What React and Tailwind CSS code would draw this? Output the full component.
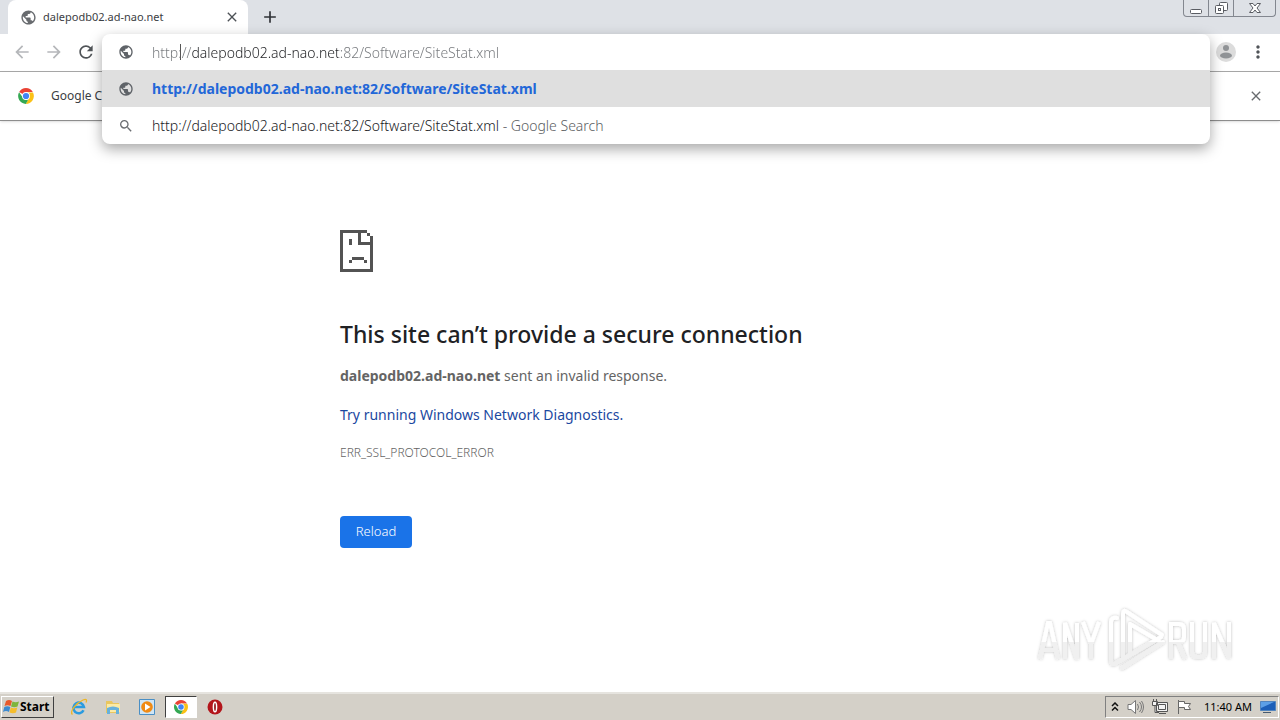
import {
  MdAdd,
  MdArrowBack,
  MdArrowForward,
  MdClose,
  MdMoreVert,
  MdPublic,
  MdRefresh,
  MdSearch,
} from 'react-icons/md';

const url = 'http://dalepodb02.ad-nao.net:82/Software/SiteStat.xml';

const ChromeLogo = ({ className }) => (
  <svg className={className} viewBox="0 0 48 48" aria-hidden="true">
    <path fill="#ea4335" d="M24 24 5.8 13.5A21 21 0 0 1 42.2 13.5H24z" />
    <path fill="#fbc116" d="M24 14.5h18.7A21 21 0 0 1 23.5 45L32.2 28.8z" />
    <path fill="#34a853" d="M5.5 14 15.8 28.8 24 33.5h6L23.5 45A21 21 0 0 1 5.5 14z" />
    <circle cx="24" cy="24" r="10.5" fill="#fff" />
    <circle cx="24" cy="24" r="8.3" fill="#4285f4" />
  </svg>
);

const SadPage = () => (
  <svg className="w-[33px] h-[42px]" viewBox="0 0 33 42" fill="#535353" shapeRendering="crispEdges" aria-hidden="true">
    <path d="M0 0h27v3h3v3h3v36H0zM3 3v36h27V15H18V3zM21 3v9h9V6h-3V3z" fillRule="evenodd" />
    <path d="M9 9h3v6H9zM12 27h12v3H12zM9 30h3v3H9zM24 30h3v3h-3z" />
  </svg>
);

const AnyRunMark = () => (
  <svg className="w-[200px] h-[68px]" viewBox="0 0 200 68" aria-hidden="true">
    <defs>
      <linearGradient id="fade" gradientUnits="userSpaceOnUse" x1="0" y1="0" x2="0" y2="68">
        <stop offset="53%" stopColor="#ffffff" />
        <stop offset="53%" stopColor="#f0f0f0" />
      </linearGradient>
      <filter id="soft" x="-10%" y="-20%" width="120%" height="140%">
        <feDropShadow dx="0" dy="0" stdDeviation="1.6" floodColor="#000" floodOpacity="0.26" />
      </filter>
    </defs>
    <g filter="url(#soft)" fill="none" stroke="url(#fade)" strokeWidth="4">
      <path d="M4 53 12 17h2l8 36M7 44h12M29 53V17l12 36V17M47 16l8 22 8-22M55 36v17" />
      <path strokeLinecap="round" strokeLinejoin="round" d="M81 12q-6-1-6 4v38q0 6 5 3l45-26M87 52V8q0-5 4-2l35 23M87 15v-5M94 18l29 17M94 18v31M127 36 86 62" />
      <path d="M135 53V18h8q5 0 5 5v8q0 5-5 5h-8M142 36l7 17M156 16v30q0 5 5 5h3q5 0 5-5V16M178 53V17l15 35V16" />
    </g>
  </svg>
);

const StartFlag = () => (
  <svg className="w-[17px] h-[16px]" viewBox="0 0 17 16" aria-hidden="true">
    <path fill="#e8592b" d="M3 2q3-2 6 0L7.5 7q-3-1.5-6 0z" />
    <path fill="#7eb53c" d="M9.5 2.5q3 1.5 6.5 0L14.5 7.5q-3 1.5-6.5 0z" />
    <path fill="#3c8ad0" d="M1.3 8q3-1.5 6 0L6 13q-3-2-6 0z" />
    <path fill="#f5bd2c" d="M7.8 8.5q3 1.5 6.5 0L13 13.5q-3 1.5-6.5 0z" />
  </svg>
);

const ExplorerIcon = () => (
  <svg className="w-[18px] h-[18px]" viewBox="0 0 18 18" aria-hidden="true">
    <path fill="none" stroke="#2a9be0" strokeWidth="2.6" d="M13.5 12.2A5.3 5.3 0 1 1 13.9 9H4" />
    <path fill="none" stroke="#edb625" strokeWidth="1.3" d="M2.5 16.5C-1 14 6 5 13 2c4-1.5 4 .5 3 2.5" />
  </svg>
);

const FolderIcon = () => (
  <svg className="w-[16px] h-[16px]" viewBox="0 0 16 16" aria-hidden="true">
    <path fill="#e9c65f" d="M1 2h6l1 2h6v10H1z" />
    <path fill="#fbeaa5" d="M2 5h13v8H2z" />
    <path fill="#67b1dc" d="M2 9q6-3 12 0v6h-3v-4H5v4H2z" />
  </svg>
);

const PlayerIcon = () => (
  <svg className="w-[16px] h-[16px]" viewBox="0 0 16 16" aria-hidden="true">
    <path fill="#cfe5f5" stroke="#4a8fc5" d="M.5.5h15v15H.5z" />
    <circle cx="8" cy="8" r="5.8" fill="#f08a13" />
    <path fill="#fff" d="M6 4.5 11.5 8 6 11.5z" />
  </svg>
);

const OperaIcon = () => (
  <svg className="w-[16px] h-[16px]" viewBox="0 0 16 16" aria-hidden="true">
    <circle cx="8" cy="8" r="7.5" fill="#b3151b" />
    <ellipse cx="8" cy="8" rx="1.6" ry="4.8" fill="#8c0d12" stroke="#fff" strokeWidth="1.5" />
  </svg>
);

const WindowButtons = () => (
  <div className="flex h-[17px] w-[93px] mr-1 border border-t-0 border-[#83878f] rounded-b text-[#5a5d63]">
    <button aria-label="Minimize" className="flex-1 flex items-center justify-center border-r border-[#83878f]">
      <svg className="w-[12px] h-[14px]" viewBox="0 0 12 14" fill="#fff" stroke="currentColor"><rect x=".5" y="8.5" width="11" height="4" rx="1" /></svg>
    </button>
    <button aria-label="Restore" className="flex-1 flex items-center justify-center border-r border-[#83878f]">
      <svg className="w-[13px] h-[14px]" viewBox="0 0 13 14" fill="#fff" stroke="currentColor">
        <rect x="4.5" y="1.5" width="8" height="8" rx="1" />
        <rect x=".5" y="4.5" width="8" height="8" rx="1" />
        <rect x="3.5" y="7.5" width="2" height="2" />
      </svg>
    </button>
    <button aria-label="Close window" className="w-[41px] flex items-center justify-center">
      <svg className="w-[12px] h-[12px]" viewBox="0 0 12 12" fill="#fff" stroke="currentColor">
        <path d="M.5 1.5h3.5L6 4l2-2.5h3.500L8 6l3.500 4.500H8L6 8l-2 2.500H.5L4 6z" />
      </svg>
    </button>
  </div>
);

const TabStrip = () => (
  <div className="flex items-start h-[34px] bg-[#dee1e6]">
    <div className="flex items-center h-full w-[240px] ml-2 pl-3 pr-2 bg-white rounded-t-lg">
      <MdPublic className="w-[17px] h-[17px] text-[#686b6f]" />
      <span className="flex-1 ml-[6px] text-[11px] text-[#3c4043]">dalepodb02.ad-nao.net</span>
      <button aria-label="Close tab"><MdClose className="w-4 h-4 text-[#4d5156]" /></button>
    </div>
    <button aria-label="New tab" className="flex items-center h-full ml-3"><MdAdd className="w-5 h-5 text-[#2f3237]" /></button>
    <div className="flex-1" />
    <WindowButtons />
  </div>
);

const Toolbar = () => (
  <div className="flex items-center h-[38px] px-3 pb-px bg-white border-b border-[#a9a9a9]">
    <button aria-label="Back" className="mr-3"><MdArrowBack className="w-5 h-5 text-[#b5b7ba]" /></button>
    <button aria-label="Forward" className="mr-3"><MdArrowForward className="w-5 h-5 text-[#b5b7ba]" /></button>
    <button aria-label="Reload page"><MdRefresh className="w-5 h-5 text-[#505458]" /></button>
    <div className="flex-1" />
    <button aria-label="Profile" className="mr-3">
      <svg className="w-5 h-5" viewBox="0 0 20 20">
        <circle cx="10" cy="10" r="10" fill="#dcdcdc" />
        <circle cx="10" cy="6" r="3" fill="#909396" />
        <ellipse cx="10" cy="13.5" rx="6" ry="3" fill="#909396" />
      </svg>
    </button>
    <button aria-label="Menu"><MdMoreVert className="w-5 h-5 text-[#505458]" /></button>
  </div>
);

const InfoBar = () => (
  <div className="flex items-center h-[49px] pl-[17px] pr-4 bg-white border-b border-[#8d8d8d] shadow">
    <ChromeLogo className="w-[18px] h-[18px]" />
    <span className="flex-1 ml-4 text-[12px] text-[#3c4043]">Google Ch</span>
    <button aria-label="Dismiss"><MdClose className="w-4 h-4 text-[#686b6f]" /></button>
  </div>
);

// Address bar with its open suggestion list, drawn over the toolbar and info bar
const Omnibox = () => (
  <div className="absolute top-[34px] left-[102px] right-[70px] bg-white rounded-lg overflow-hidden shadow-[0_5px_14px_rgba(0,0,0,0.35)] text-[14px] font-light">
    <div className="relative flex items-center h-9 pl-4">
      <MdPublic className="w-4 h-4 mr-[18px] text-[#5f6368]" />
      <input
        aria-label="Address and search bar"
        defaultValue={url}
        className="flex-1 min-w-0 bg-clip-text text-transparent outline-none bg-[linear-gradient(90deg,#74777b_0_40px,#202124_40px_186px,#74777b_186px)]"
      />
      <span className="absolute left-[78px] top-[10px] w-px h-4 bg-[#555]" />
    </div>
    <ul>
      <li className="flex items-center h-[37px] pl-4 bg-[#dfdfdf]">
        <MdPublic className="w-4 h-4 mr-[18px] text-[#5f6368]" />
        <a href="#top" className="font-bold text-[#2367d8]">{url}</a>
      </li>
      <li className="flex items-center h-[37px] pl-4 text-[#202124]">
        <MdSearch className="w-4 h-4 mr-[18px] text-[#6b6e72]" />
        <a href="#search">
          {url}<span className="text-[#5b5e62]"> - Google Search</span>
        </a>
      </li>
    </ul>
  </div>
);

const ErrorPage = () => (
  <main className="w-full max-w-[600px] mx-auto pt-[109px] text-[#646464]">
    <SadPage />
    <h1 className="mt-11 text-[23px] leading-[36px] font-medium text-[#202124]">This site can’t provide a secure connection</h1>
    <p className="mt-3 text-[14px] leading-6"><strong>dalepodb02.ad-nao.net</strong> sent an invalid response.</p>
    <p className="mt-[15px] text-[14px] leading-6"><a href="#diagnose" className="text-[#1b489f]">Try running Windows Network Diagnostics.</a></p>
    <p className="mt-4 text-[12px] leading-5 font-light">ERR_SSL_PROTOCOL_ERROR</p>
    <button className="mt-[53px] h-8 w-[72px] rounded bg-[#1a73e8] text-[13px] font-light text-white">Reload</button>
  </main>
);

const Taskbar = () => (
  <footer className="flex items-center h-[28px] pr-px bg-[#d4d0c8] border-t-2 border-[#e6e4df]">
    <button className="flex items-center h-[22px] w-[53px] ml-[1px] mr-4 pl-px bg-[#d4d0c8] border border-t-white border-l-white border-r-[#404040] border-b-[#404040] text-[12px] font-bold text-black">
      <StartFlag />Start
    </button>
    <button aria-label="Internet Explorer" className="w-[34px]"><ExplorerIcon /></button>
    <button aria-label="Explorer" className="w-[34px] pl-px"><FolderIcon /></button>
    <button aria-label="Media Player" className="w-[27px] pl-px"><PlayerIcon /></button>
    <button aria-label="Chrome" className="flex items-center justify-center w-[32px] h-[22px] mr-[10px] bg-white border border-t-[#404040] border-l-[#404040] border-r-white border-b-white">
      <ChromeLogo className="w-4 h-4" />
    </button>
    <button aria-label="Opera"><OperaIcon /></button>
    <div className="flex-1" />
    <div className="flex items-center gap-2 h-[22px] pl-[5px] pr-[2px] border border-t-[#808080] border-l-[#808080] border-r-white border-b-white text-[11px] text-black">
      <svg className="w-[8px] h-[10px]" viewBox="0 0 8 10" fill="none" stroke="#111" strokeWidth="1.5"><path d="m1 4 3-3 3 3M1 8.5l3-3 3 3" /></svg>
      <svg className="w-[17px] h-[16px]" viewBox="0 0 17 16" fill="#fff" stroke="#777"><path d="M1 5.5h3L8.500 1.500v13L4 10.500H1z" /><path fill="none" d="M10.500 5q2 3 0 6M12.500 3q4 5 0 10M14.500 2q4 6 0 12" /></svg>
      <svg className="w-[16px] h-[16px]" viewBox="0 0 16 16" fill="#f3f3f3" stroke="#555"><path d="M4.500 3.500h11v9h-11zM6.500 5.500h7v5h-7zM7 14.500h7M.5 2.500h5v4h-5zM1.500 0v2M4.500 0v2M3 7v6.500h4" /></svg>
      <svg className="w-[16px] h-[16px]" viewBox="0 0 16 16" fill="#fff" stroke="#666"><path d="M2.500 1v14" /><path d="M2.500 2.500h6v2h6l-2 3 2 3h-6v-2h-6z" /></svg>
      <time className="ml-1">11:40 AM</time>
      <svg className="w-[16px] h-[14px]" viewBox="0 0 16 14"><path fill="#1d5fb8" stroke="#5284bd" d="M.5 1.500h15v9H.5z" /><path fill="#5c9fe6" d="M1 2h13L1 8z" /><path fill="#465a70" d="M3 12h8v1H3z" /></svg>
    </div>
  </footer>
);

const App = () => {
  return (
    <div className="relative flex flex-col min-h-screen bg-white font-['Noto_Sans','Open_Sans',sans-serif]">
      <TabStrip />
      <Toolbar />
      <InfoBar />
      <Omnibox />
      <div className="flex-1">
        <ErrorPage />
      </div>
      <Taskbar />
      <div className="absolute right-[44px] bottom-[46px] pointer-events-none">
        <AnyRunMark />
      </div>
    </div>
  );
};

export default App;
